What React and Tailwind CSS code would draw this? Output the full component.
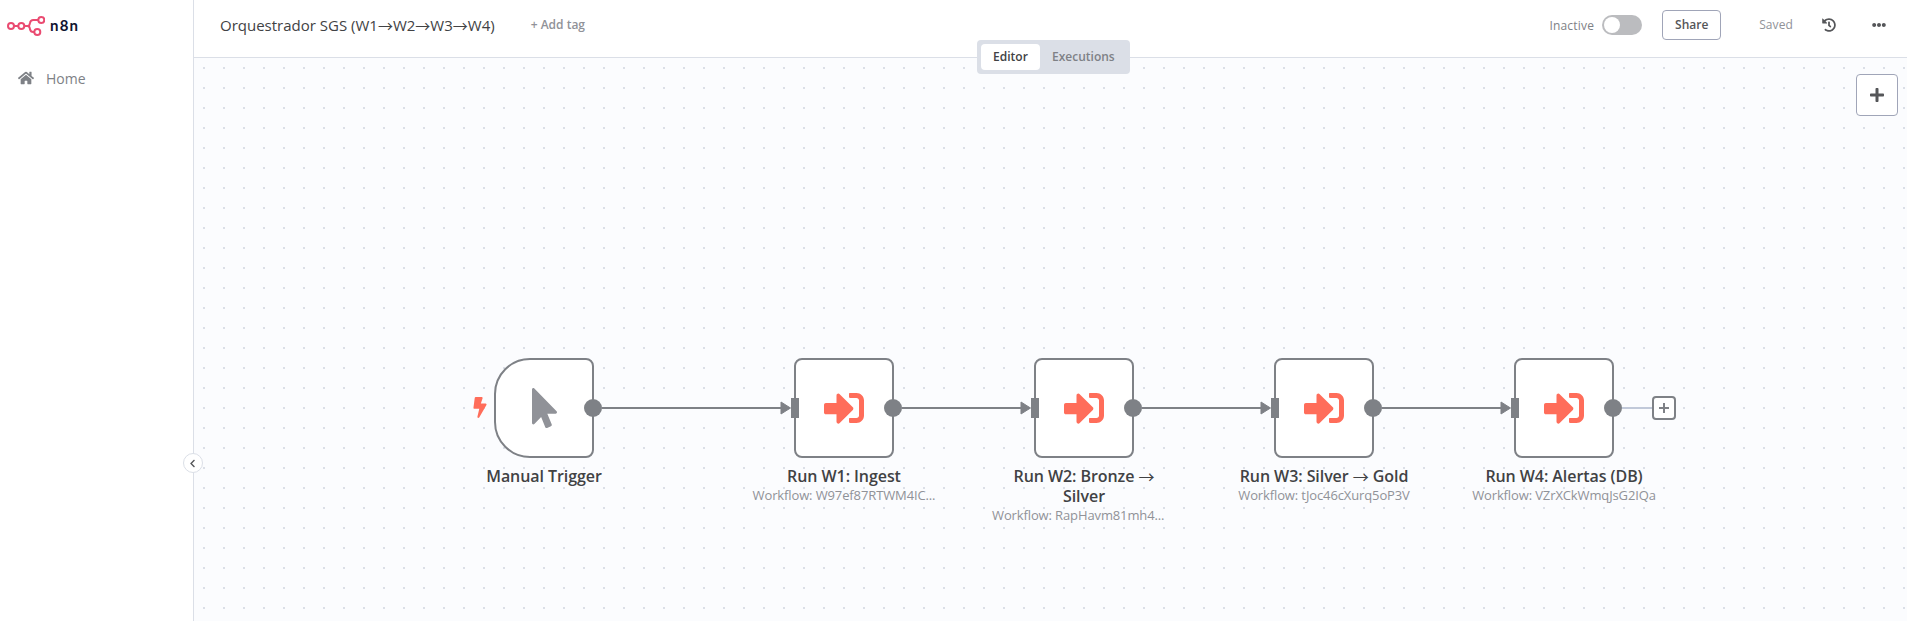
import { FaHome, FaBolt, FaMousePointer, FaSignInAlt, FaHistory, FaEllipsisH, FaPlus, FaChevronLeft } from 'react-icons/fa';

function Arrow() {
  return <span className="inline-block translate-y-px font-['Noto_Sans_CJK_JP'] leading-none font-normal tracking-normal">→</span>;
}

const steps = [
  { id: 1, left: 'left-[600px]', title: 'Run W1: Ingest', sub: 'Workflow: W97ef87RTWM4IC...' },
  { id: 2, left: 'left-[840px]', title: <>Run W2: Bronze <Arrow /> Silver</>, sub: 'Workflow: RapHavm81mh4...', clipped: true },
  { id: 3, left: 'left-[1080px]', title: <>Run W3: Silver <Arrow /> Gold</>, sub: 'Workflow: tJoc46cXurq5oP3V' },
  { id: 4, left: 'left-[1320px]', title: 'Run W4: Alertas (DB)', sub: 'Workflow: VZrXCkWmqJsG2IQa' },
];

const edges = [
  { left: 'left-[408px]', width: 'w-[189px]' },
  { left: 'left-[708px]', width: 'w-[129px]' },
  { left: 'left-[948px]', width: 'w-[129px]' },
  { left: 'left-[1188px]', width: 'w-[129px]' },
];

function Logo() {
  return (
    <svg className="h-5 w-[38px]" viewBox="0 0 38 20" fill="none" stroke="#ea4b71" strokeWidth="2">
      <circle cx="4" cy="10" r="3" />
      <circle cx="14.3" cy="10" r="3" />
      <circle cx="34.3" cy="4" r="3" />
      <circle cx="30.3" cy="16" r="3" />
      <path d="M7 10h4.3M17.3 10h3.2c2.3 0 2.1-1.6 2.5-3.2.4-1.8 1.4-2.8 3.2-2.8h5.1M20.5 10c2.3 0 2.1 1.6 2.5 3.2.4 1.8 1.4 2.8 3.2 2.8h1.1" />
    </svg>
  );
}

function OutputDot() {
  return <span className="absolute top-[39px] -right-[10px] size-[18px] rounded-full bg-[#7e8186]" />;
}

function Edge({ left, width }) {
  return (
    <div className={`absolute top-[343px] flex h-[14px] items-center ${left} ${width}`}>
      <span className="h-[2px] flex-1 bg-[#7e8186]" />
      <svg className="-ml-px h-[14px] w-[11px]" viewBox="0 0 11 14">
        <path d="M1 1 10.5 7 1 13Z" fill="#7e8186" stroke="#7e8186" strokeWidth="1" strokeLinejoin="round" />
      </svg>
    </div>
  );
}

function NodeLabel({ title, sub, clipped }) {
  return (
    <div className="mt-[8px] flex w-[200px] -translate-x-[50px] flex-col items-center text-center">
      <div className="w-[180px] text-[16px] leading-[20px] font-semibold tracking-[-0.07px] text-[#414244]">{title}</div>
      {sub && (
        <div className={`w-[184px] text-[13px] leading-[18px] tracking-[-0.12px] whitespace-nowrap text-[#909298] ${clipped ? 'text-left' : 'text-center'}`}>
          {sub}
        </div>
      )}
    </div>
  );
}

function StepNode({ left, title, sub, clipped }) {
  return (
    <div className={`absolute top-[300px] w-[100px] ${left}`}>
      <div className="relative flex size-[100px] items-center justify-center rounded-lg border-2 border-[#7e8186] bg-white">
        <FaSignInAlt className="size-10 text-[#ff6d5a]" />
        <span className="absolute top-[38px] -left-[5px] h-5 w-2 bg-[#7e8186]" />
        <OutputDot />
      </div>
      <NodeLabel title={title} sub={sub} clipped={clipped} />
    </div>
  );
}

function Sidebar() {
  return (
    <aside className="relative flex w-[194px] shrink-0 flex-col border-r border-[#dbdfe7] bg-white">
      <div className="flex h-[50px] items-center gap-[5px] pt-[2px] pl-[7px]">
        <Logo />
        <span className="-mt-[2px] font-[Lato] text-[15px] leading-5 font-bold tracking-[1.2px] text-[#101330]">n8n</span>
      </div>
      <div className="mt-[13px] flex h-[30px] items-center gap-[12px] pl-[18px] text-[#7e8186]">
        <FaHome className="size-4" />
        <span className="text-[14px]">Home</span>
      </div>
      <button className="absolute top-[453px] -right-[10px] z-20 flex size-5 items-center justify-center rounded-full border border-[#dbdfe7] bg-white pr-[2px] text-[#555659]">
        <FaChevronLeft className="size-[9px]" />
      </button>
    </aside>
  );
}

function Header() {
  return (
    <header className="relative flex h-[58px] shrink-0 items-center border-b border-[#dbdfe7] bg-white pb-[7px] pl-[26px]">
      <h1 className="text-[15px] leading-[22px] whitespace-nowrap text-[#414244]">
        Orquestrador SGS (W1<Arrow />W2<Arrow />W3<Arrow />W4)
      </h1>
      <span className="ml-[36px] text-[12px] font-semibold text-[#909298]">+ Add tag</span>
      <div className="ml-auto flex items-center pr-[21px]">
        <span className="pt-[2px] text-[12px] tracking-[0.2px] text-[#7e8186]">Inactive</span>
        <span className="ml-[8px] flex h-5 w-10 items-center rounded-full bg-[#bbbcbf] px-[2px]">
          <span className="size-4 rounded-full bg-white" />
        </span>
        <button className="ml-5 h-[30px] w-[59px] rounded border border-[#a0a5b8] text-[12px] font-semibold text-[#555659]">Share</button>
        <span className="ml-[38px] text-[12px] tracking-[0.1px] text-[#909298]">Saved</span>
        <FaHistory className="ml-[29px] size-[14px] text-[#555659]" />
        <FaEllipsisH className="ml-[36px] size-[14px] text-[#555659]" />
      </div>
      <div className="absolute top-[40px] left-[783px] z-10 flex h-[34px] w-[153px] rounded bg-[#dbdfe7] p-1 text-[12px] font-semibold">
        <span className="flex w-[59px] items-center justify-center rounded bg-white text-[#414244]">Editor</span>
        <span className="flex flex-1 items-center pl-[12px] text-[#7e8186]">Executions</span>
      </div>
    </header>
  );
}

function Canvas() {
  return (
    <main className="relative flex-1 overflow-hidden bg-[#fbfcfe]">
      <svg className="absolute inset-0 size-full">
        <defs>
          <pattern id="dots" x="9" y="9" width="20" height="20" patternUnits="userSpaceOnUse">
            <rect width="2" height="2" fill="#dbdfe7" />
          </pattern>
        </defs>
        <rect width="100%" height="100%" fill="url(#dots)" />
      </svg>
      {edges.map((e) => (
        <Edge key={e.left} {...e} />
      ))}
      <div className="absolute top-[300px] left-[300px] w-[100px]">
        <FaBolt className="absolute top-[39px] -left-[25px] h-[21px] w-[22px] text-[#ff6d5a]" />
        <div className="relative flex size-[100px] items-center justify-center rounded-l-[36px] rounded-r-lg border-2 border-[#7e8186] bg-white">
          <FaMousePointer className="size-10 translate-x-[0.5px] text-[#909298]" />
          <OutputDot />
        </div>
        <NodeLabel title="Manual Trigger" />
      </div>
      {steps.map(({ id, ...s }) => (
        <StepNode key={id} {...s} />
      ))}
      <div className="absolute top-[338px] left-[1428px] flex items-center">
        <span className="h-[2px] w-[30px] bg-[#c1c9d9]" />
        <span className="flex size-6 items-center justify-center rounded border-2 border-[#7e8186] bg-white">
          <svg className="size-[10px]" viewBox="0 0 10 10" stroke="#7e8186" strokeWidth="2">
            <path d="M5 0v10M0 5h10" />
          </svg>
        </span>
      </div>
      <button className="absolute top-[16px] right-[9px] flex size-[42px] items-center justify-center rounded border border-[#a0a5b8] bg-white text-[#555659]">
        <FaPlus className="size-4" />
      </button>
    </main>
  );
}

export default function App() {
  return (
    <div className="flex h-screen w-full overflow-hidden bg-white font-['Open_Sans',sans-serif]">
      <Sidebar />
      <div className="flex min-w-0 flex-1 flex-col">
        <Header />
        <Canvas />
      </div>
    </div>
  );
}
